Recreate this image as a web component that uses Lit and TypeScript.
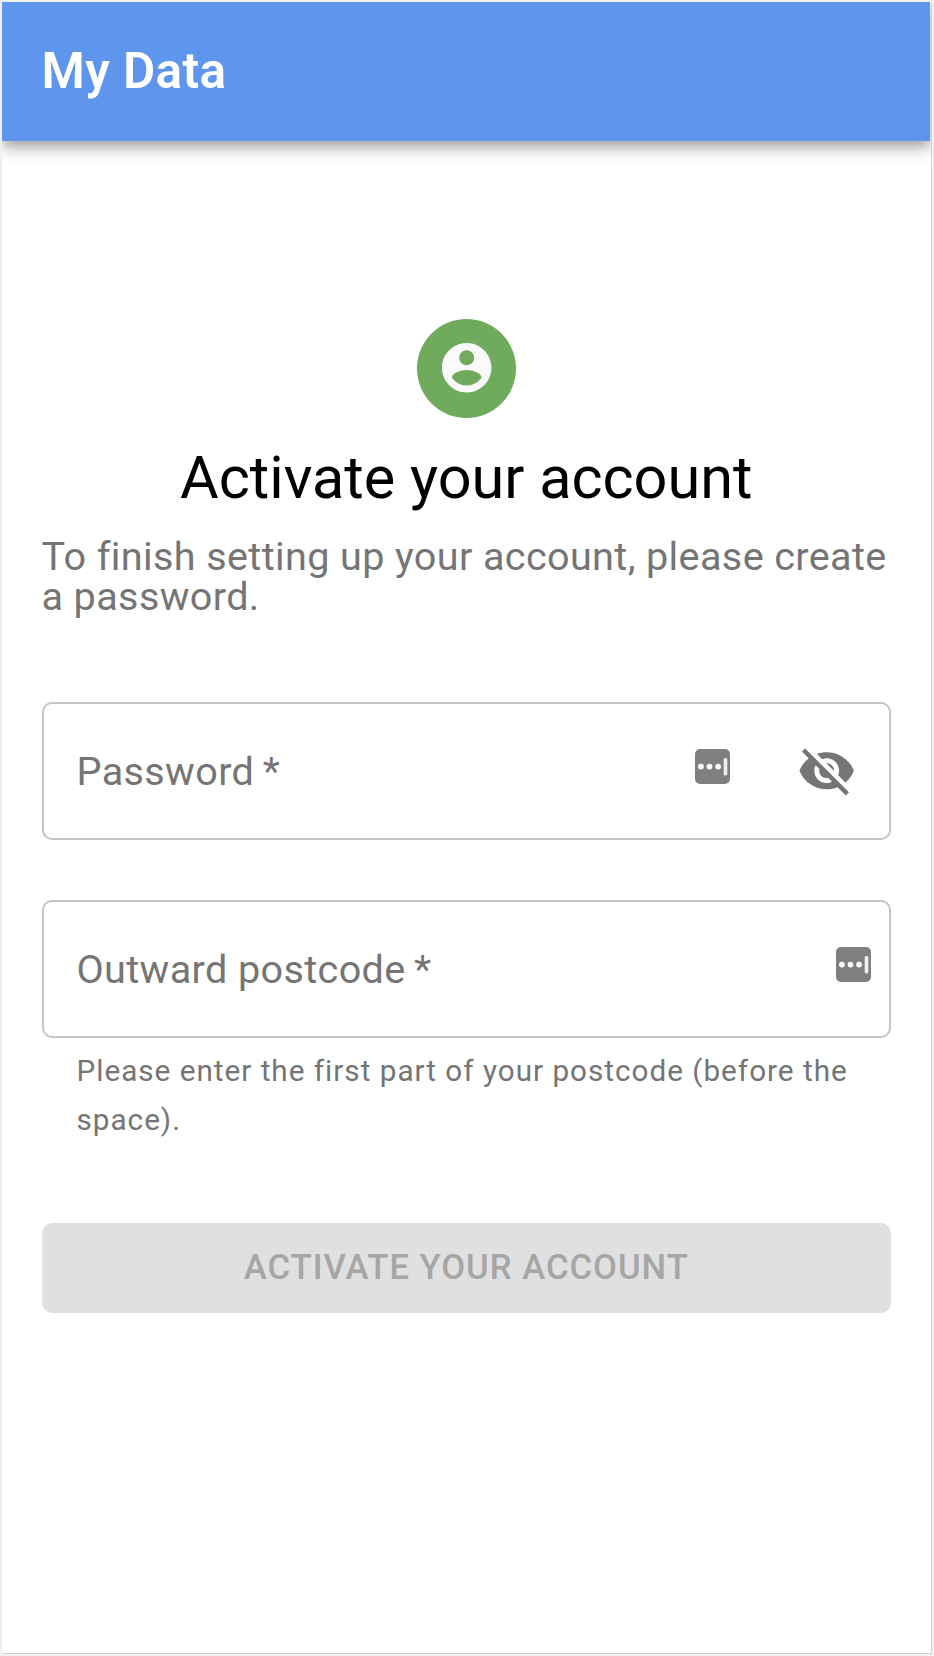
import { LitElement, html, css, svg } from "lit";
import { customElement, property } from "lit/decorators.js";

const managerIcon = svg`<svg class="manager" viewBox="0 0 35 35" width="35" height="35">
  <rect width="35" height="35" rx="5" fill="#808080"/>
  <circle cx="5.9" cy="17.6" r="2.9" fill="#fff"/>
  <circle cx="14.5" cy="17.6" r="2.9" fill="#fff"/>
  <circle cx="23.1" cy="17.6" r="2.9" fill="#fff"/>
  <rect x="28.7" y="9" width="3.6" height="17.4" rx="1.4" fill="#f0f0f0"/>
</svg>`;

const eyeOffIcon = svg`<svg class="eye" viewBox="0 0 24 24" width="59.4" height="59.4" fill="#757575">
  <path d="M12 7c2.76 0 5 2.24 5 5 0 .65-.13 1.26-.36 1.83l2.92 2.92c1.51-1.26 2.7-2.89 3.43-4.75-1.73-4.39-6-7.5-11-7.5-1.4 0-2.74.25-3.98.7l2.16 2.16C10.74 7.13 11.35 7 12 7zM2 4.27l2.28 2.28.46.46C3.08 8.3 1.78 10.02 1 12c1.73 4.39 6 7.5 11 7.5 1.55 0 3.03-.3 4.38-.84l.42.42L19.73 22 21 20.73 3.27 3 2 4.27zM7.53 9.8l1.55 1.55c-.05.21-.08.43-.08.65 0 1.66 1.34 3 3 3 .22 0 .44-.03.65-.08l1.55 1.55c-.67.33-1.41.53-2.2.53-2.76 0-5-2.24-5-5 0-.79.2-1.53.53-2.2zm4.31-.78l3.15 3.15.02-.16c0-1.66-1.34-3-3-3l-.17.01z"/>
</svg>`;

@customElement("outlined-field")
export class OutlinedField extends LitElement {
  @property() label = "";
  @property({ type: Boolean }) secret = false;

  static styles = css`
    :host { display: block; }
    .box {
      box-sizing: border-box;
      height: 138.6px;
      border: 2px solid #c4c4c4;
      border-radius: 10px;
      display: flex;
      align-items: center;
      padding: 0 18.5px 0 33px;
    }
    .secret { padding-right: 32.5px; }
    .label { flex: 1; color: #757575; font-size: 39.6px; line-height: 46px; letter-spacing: 0.371px; padding-top: 1.5px; }
    .manager { display: block; margin-bottom: 8.4px; }
    .eye { display: block; margin-left: 67.5px; margin-top: 0.5px; }
  `;

  render() {
    return html`<div class="box ${this.secret ? "secret" : ""}">
      <span class="label">${this.label}&thinsp;*</span>
      ${managerIcon}${this.secret ? eyeOffIcon : ""}
    </div>`;
  }
}

@customElement("app-root")
export class AppRoot extends LitElement {
  static styles = css`
    :host {
      display: block;
      box-sizing: border-box;
      height: 1656px;
      padding: 2px;
      background: #f0f0f0;
      font-family: Roboto, sans-serif;
    }
    .screen {
      box-sizing: border-box;
      height: 100%;
      overflow: hidden;
      background: #fff;
      border-right: 1px solid #d2d2d2;
      border-bottom: 1px solid #d2d2d2;
    }
    .bar {
      height: 138.6px;
      margin-right: 1px;
      display: flex;
      align-items: center;
      padding-left: 39.6px;
      background: #5e96ed;
      color: #fff;
      box-shadow: 0 5px 10px -2.5px rgba(0, 0, 0, 0.2), 0 10px 12.4px 0 rgba(0, 0, 0, 0.14), 0 2.5px 25px 0 rgba(0, 0, 0, 0.12);
    }
    .brand { margin: 0; font-size: 49.5px; font-weight: 600; line-height: 79px; letter-spacing: 0.371px; }
    .content { padding: 178px 40px 0 39.5px; display: flex; flex-direction: column; }
    .avatar {
      width: 99px;
      height: 99px;
      border-radius: 50%;
      background: #6faa5d;
      align-self: center;
      display: flex;
      align-items: center;
      justify-content: center;
    }
    .heading { margin: 21px 0 0; text-align: center; color: #000; font-size: 59.4px; font-weight: 400; line-height: 79px; }
    .intro { margin: 19px 0 0; color: #757575; font-size: 39.6px; line-height: 40px; letter-spacing: 0.371px; }
    .password { margin-top: 85px; }
    .postcode { margin-top: 59.4px; }
    .hint { margin: 7.4px 35px 0; color: #757575; font-size: 29.7px; line-height: 49.3px; letter-spacing: 0.99px; }
    .submit {
      margin-top: 78.5px;
      height: 90px;
      border: 0;
      padding: 0 0 2px;
      border-radius: 10px;
      background: #e0e0e0;
      color: #a6a6a6;
      font: 500 34.65px/60px Roboto, sans-serif;
      letter-spacing: 0.99px;
      text-transform: uppercase;
    }
  `;

  render() {
    return html`<div class="screen">
      <header class="bar"><h6 class="brand">My Data</h6></header>
      <main class="content">
        <div class="avatar">
          <svg viewBox="0 0 24 24" width="59.4" height="59.4" fill="#fafafa">
            <path d="M12 2C6.48 2 2 6.48 2 12s4.48 10 10 10 10-4.48 10-10S17.52 2 12 2zm0 3c1.66 0 3 1.34 3 3s-1.34 3-3 3-3-1.34-3-3 1.34-3 3-3zm0 14.2c-2.5 0-4.71-1.28-6-3.22.03-1.99 4-3.08 6-3.08 1.99 0 5.97 1.09 6 3.08-1.29 1.94-3.5 3.22-6 3.22z"/>
          </svg>
        </div>
        <h1 class="heading">Activate your account</h1>
        <p class="intro">To finish setting up your account, please create a password.</p>
        <outlined-field class="password" label="Password" secret></outlined-field>
        <outlined-field class="postcode" label="Outward postcode"></outlined-field>
        <p class="hint">Please enter the first part of your postcode (before the space).</p>
        <button class="submit" disabled>Activate your account</button>
      </main>
    </div>`;
  }
}
